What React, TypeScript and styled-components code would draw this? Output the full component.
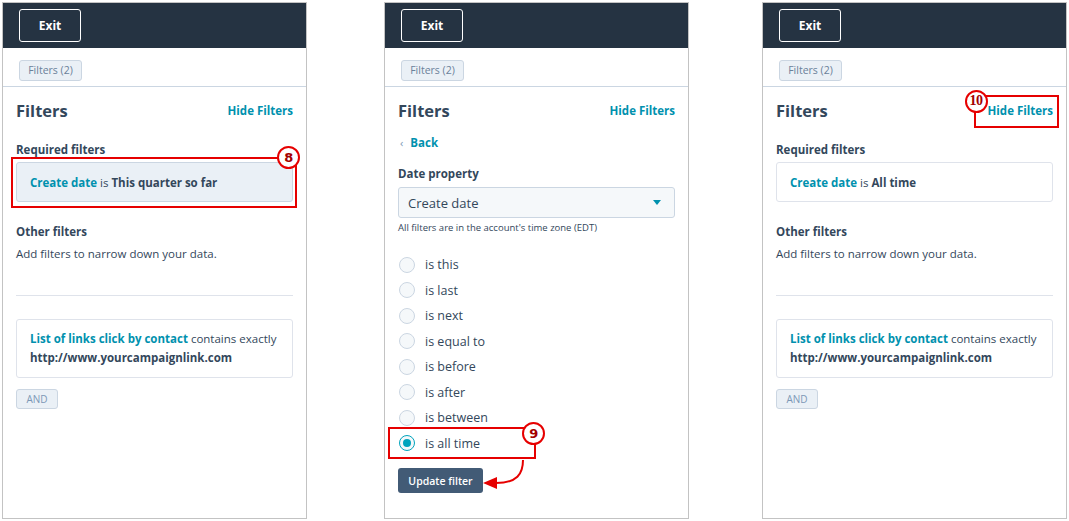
import React from 'react';
import styled, { createGlobalStyle } from 'styled-components';

const colors = {
    navy: '#253342',
    text: '#33475b',
    link: '#0091ae',
    border: '#cbd6e2',
    soft: '#eaf0f6',
    frame: '#c3c3c3',
    red: '#e60000',
};

const GlobalStyle = createGlobalStyle`
    html, body {
        margin: 0;
        background: #ffffff;
    }
    body {
        font-family: "Open Sans", "Noto Sans", sans-serif;
        color: ${colors.text};
    }
`;

const Styles = {
    Page: styled.div`
        display: flex;
        justify-content: space-between;
        align-items: flex-start;
        padding: 2px 2px 0 2px;
        width: 1069px;
        height: 521px;
        box-sizing: border-box;

        & > :nth-child(2) {
            margin-left: 4px;
        }
    `,

    Panel: styled.section`
        position: relative;
        display: flex;
        flex-direction: column;
        width: 305px;
        height: 517px;
        box-sizing: border-box;
        border: 1px solid ${colors.frame};
        background: #ffffff;
    `,

    Header: styled.header`
        display: flex;
        align-items: flex-start;
        height: 45px;
        padding: 6px 16px 0;
        box-sizing: border-box;
        background: ${colors.navy};
    `,

    ExitButton: styled.button`
        width: 62px;
        height: 33px;
        border: 1px solid #ffffff;
        border-radius: 3px;
        background: transparent;
        color: #ffffff;
        font-family: inherit;
        font-size: 12px;
        font-weight: 700;
        padding: 0;
    `,

    Toolbar: styled.div`
        height: 39px;
        padding: 9px 16px 0;
        box-sizing: border-box;
        border-bottom: 1px solid ${colors.border};
    `,

    Chip: styled.span`
        display: inline-flex;
        align-items: center;
        justify-content: center;
        width: 63px;
        height: 21px;
        box-sizing: border-box;
        border: 1px solid ${colors.border};
        border-radius: 3px;
        background: ${colors.soft};
        color: #6b819a;
        font-size: 10.5px;
    `,

    Body: styled.div`
        display: flex;
        flex-direction: column;
        padding: 13px 13px 0;
    `,

    TitleRow: styled.div`
        display: flex;
        justify-content: space-between;
        align-items: center;
        height: 22px;
    `,

    Title: styled.h2`
        margin: 0;
        font-size: 16.5px;
        font-weight: 700;
        line-height: 22px;
        color: ${colors.text};
    `,

    HideLink: styled.a`
        position: relative;
        font-size: 11.5px;
        font-weight: 700;
        color: ${colors.link};
        margin-top: -2px;
    `,

    Label: styled.h3<{ $top: number }>`
        margin: ${(p) => p.$top}px 0 0;
        font-size: 11.5px;
        font-weight: 700;
        line-height: 16px;
        color: ${colors.text};
    `,

    Note: styled.p<{ $top: number }>`
        margin: ${(p) => p.$top}px 0 0;
        font-size: 11.5px;
        line-height: 16px;
    `,

    Anchor: styled.div`
        position: relative;
        margin-top: 4px;
    `,

    FilterCard: styled.div<{ $filled?: boolean }>`
        height: 40px;
        display: flex;
        align-items: center;
        padding: 0 13px;
        box-sizing: border-box;
        border: 1px solid ${(p) => (p.$filled ? colors.border : '#dfe3eb')};
        border-radius: 3px;
        background: ${(p) => (p.$filled ? colors.soft : '#ffffff')};
        font-size: 11.5px;
    `,

    LinkText: styled.span`
        color: ${colors.link};
        font-weight: 700;
    `,

    Strong: styled.span`
        font-weight: 700;
        color: ${colors.text};
    `,

    Divider: styled.hr`
        margin: 33px 0 0;
        border: 0;
        border-top: 1px solid #dfe3eb;
    `,

    RuleCard: styled.div`
        margin-top: 23px;
        height: 59px;
        padding: 9px 13px 0;
        box-sizing: border-box;
        border: 1px solid #dfe3eb;
        border-radius: 3px;
        font-size: 11.5px;
        line-height: 19px;
    `,

    AndButton: styled.span`
        display: inline-flex;
        align-items: center;
        justify-content: center;
        align-self: flex-start;
        margin-top: 11px;
        width: 42px;
        height: 20px;
        box-sizing: border-box;
        border: 1px solid ${colors.border};
        border-radius: 3px;
        background: ${colors.soft};
        color: #7c98b6;
        font-size: 10px;
    `,

    Back: styled.a`
        display: flex;
        align-items: center;
        gap: 7px;
        margin-top: 12px;
        height: 16px;
        font-size: 11.5px;
        font-weight: 700;
        color: ${colors.link};
    `,

    Chevron: styled.span`
        font-weight: 400;
        font-size: 11px;
        color: #7c98b6;
        margin-left: 2px;
    `,

    Select: styled.div`
        display: flex;
        align-items: center;
        justify-content: space-between;
        margin-top: 5px;
        height: 31px;
        padding: 0 13px 0 9px;
        box-sizing: border-box;
        border: 1px solid ${colors.border};
        border-radius: 3px;
        background: #f5f8fa;
        font-size: 13px;
    `,

    Caret: styled.span`
        width: 0;
        height: 0;
        border-left: 4.5px solid transparent;
        border-right: 4.5px solid transparent;
        border-top: 5px solid ${colors.link};
    `,

    Help: styled.p`
        margin: 4px 0 0;
        font-size: 9.5px;
        line-height: 12px;
    `,

    RadioList: styled.div`
        display: flex;
        flex-direction: column;
        margin-top: 18px;
    `,

    RadioRow: styled.label`
        position: relative;
        display: flex;
        align-items: center;
        gap: 10px;
        height: 25.5px;
        font-size: 12.5px;
    `,

    RadioDot: styled.span<{ $on?: boolean }>`
        display: inline-flex;
        align-items: center;
        justify-content: center;
        width: 16px;
        height: 16px;
        box-sizing: border-box;
        border-radius: 50%;
        border: 1.5px solid ${(p) => (p.$on ? '#00a4bd' : colors.border)};
        background: #f5f8fa;
        margin-left: 1px;

        &::after {
            content: '';
            display: ${(p) => (p.$on ? 'block' : 'none')};
            width: 8px;
            height: 8px;
            border-radius: 50%;
            background: #00a4bd;
        }
    `,

    UpdateButton: styled.button`
        align-self: flex-start;
        margin-top: 12px;
        width: 85px;
        height: 25px;
        border: 0;
        border-radius: 3px;
        background: #425b76;
        color: #ffffff;
        font-family: inherit;
        font-size: 10.5px;
        font-weight: 600;
        padding: 0;
    `,

    Highlight: styled.span<{ $inset: string }>`
        position: absolute;
        inset: ${(p) => p.$inset};
        border: 2px solid ${colors.red};
        pointer-events: none;
    `,

    Badge: styled.span<{ $x: number; $y: number; $serif?: boolean }>`
        position: absolute;
        left: ${(p) => p.$x}px;
        top: ${(p) => p.$y}px;
        width: 23px;
        height: 23px;
        box-sizing: border-box;
        display: flex;
        align-items: center;
        justify-content: center;
        border-radius: 50%;
        border: 2.5px solid ${colors.red};
        background: #ffffff;
        color: #a30000;
        font-family: ${(p) => (p.$serif ? '"Liberation Serif", serif' : '"DejaVu Sans", sans-serif')};
        font-size: ${(p) => (p.$serif ? '14px' : '13px')};
        font-weight: 700;
        letter-spacing: -0.5px;
        z-index: 2;
    `,

    Arrow: styled.svg`
        position: absolute;
        left: 98px;
        top: 455px;
        overflow: visible;
    `,
};

const radios = ['is this', 'is last', 'is next', 'is equal to', 'is before', 'is after', 'is between', 'is all time'];

const Chrome: React.FC = () => (
    <>
        <Styles.Header>
            <Styles.ExitButton>Exit</Styles.ExitButton>
        </Styles.Header>
        <Styles.Toolbar>
            <Styles.Chip>Filters (2)</Styles.Chip>
        </Styles.Toolbar>
    </>
);

const Rule: React.FC = () => (
    <>
        <Styles.Divider />
        <Styles.RuleCard>
            <Styles.LinkText>List of links click by contact</Styles.LinkText> contains exactly
            <br />
            <Styles.Strong>http://www.yourcampaignlink.com</Styles.Strong>
        </Styles.RuleCard>
        <Styles.AndButton>AND</Styles.AndButton>
    </>
);

const FirstPanel: React.FC = () => (
    <Styles.Panel>
        <Chrome />
        <Styles.Body>
            <Styles.TitleRow>
                <Styles.Title>Filters</Styles.Title>
                <Styles.HideLink>Hide Filters</Styles.HideLink>
            </Styles.TitleRow>
            <Styles.Label $top={20}>Required filters</Styles.Label>
            <Styles.Anchor>
                <Styles.FilterCard $filled>
                    <span>
                        <Styles.LinkText>Create date</Styles.LinkText> is{' '}
                        <Styles.Strong>This quarter so far</Styles.Strong>
                    </span>
                </Styles.FilterCard>
                <Styles.Highlight $inset="-5px -4px -6px -5px" />
                <Styles.Badge $x={261} $y={-16}>8</Styles.Badge>
            </Styles.Anchor>
            <Styles.Label $top={22}>Other filters</Styles.Label>
            <Styles.Note $top={6}>Add filters to narrow down your data.</Styles.Note>
            <Rule />
        </Styles.Body>
    </Styles.Panel>
);

const SecondPanel: React.FC = () => (
    <Styles.Panel>
        <Chrome />
        <Styles.Body>
            <Styles.TitleRow>
                <Styles.Title>Filters</Styles.Title>
                <Styles.HideLink>Hide Filters</Styles.HideLink>
            </Styles.TitleRow>
            <Styles.Back>
                <Styles.Chevron>‹</Styles.Chevron>Back
            </Styles.Back>
            <Styles.Label $top={16}>Date property</Styles.Label>
            <Styles.Select>
                Create date
                <Styles.Caret />
            </Styles.Select>
            <Styles.Help>All filters are in the account's time zone (EDT)</Styles.Help>
            <Styles.RadioList>
                {radios.map((r, i) => {
                    const on = i === radios.length - 1;
                    return (
                        <Styles.RadioRow key={r}>
                            <Styles.RadioDot $on={on} />
                            {r}
                            {on && (
                                <>
                                    <Styles.Highlight $inset="-4px 139px -3px -10px" />
                                    <Styles.Badge $x={124} $y={-9}>9</Styles.Badge>
                                </>
                            )}
                        </Styles.RadioRow>
                    );
                })}
            </Styles.RadioList>
            <Styles.UpdateButton>Update filter</Styles.UpdateButton>
        </Styles.Body>
        <Styles.Arrow width="44" height="32" viewBox="0 0 44 32">
            <path d="M40 2 C40 16 34 25 13 25" fill="none" stroke={colors.red} strokeWidth="2" />
            <polygon points="0,25 14,19 14,31" fill={colors.red} />
        </Styles.Arrow>
    </Styles.Panel>
);

const ThirdPanel: React.FC = () => (
    <Styles.Panel>
        <Chrome />
        <Styles.Body>
            <Styles.TitleRow>
                <Styles.Title>Filters</Styles.Title>
                <Styles.HideLink>
                    Hide Filters
                    <Styles.Highlight $inset="-8px -6px -10px -14px" />
                    <Styles.Badge $x={-23} $y={-13} $serif>10</Styles.Badge>
                </Styles.HideLink>
            </Styles.TitleRow>
            <Styles.Label $top={20}>Required filters</Styles.Label>
            <Styles.Anchor>
                <Styles.FilterCard>
                    <span>
                        <Styles.LinkText>Create date</Styles.LinkText> is <Styles.Strong>All time</Styles.Strong>
                    </span>
                </Styles.FilterCard>
            </Styles.Anchor>
            <Styles.Label $top={22}>Other filters</Styles.Label>
            <Styles.Note $top={6}>Add filters to narrow down your data.</Styles.Note>
            <Rule />
        </Styles.Body>
    </Styles.Panel>
);

export default function App() {
    return (
        <>
            <GlobalStyle />
            <Styles.Page>
                <FirstPanel />
                <SecondPanel />
                <ThirdPanel />
            </Styles.Page>
        </>
    );
}
